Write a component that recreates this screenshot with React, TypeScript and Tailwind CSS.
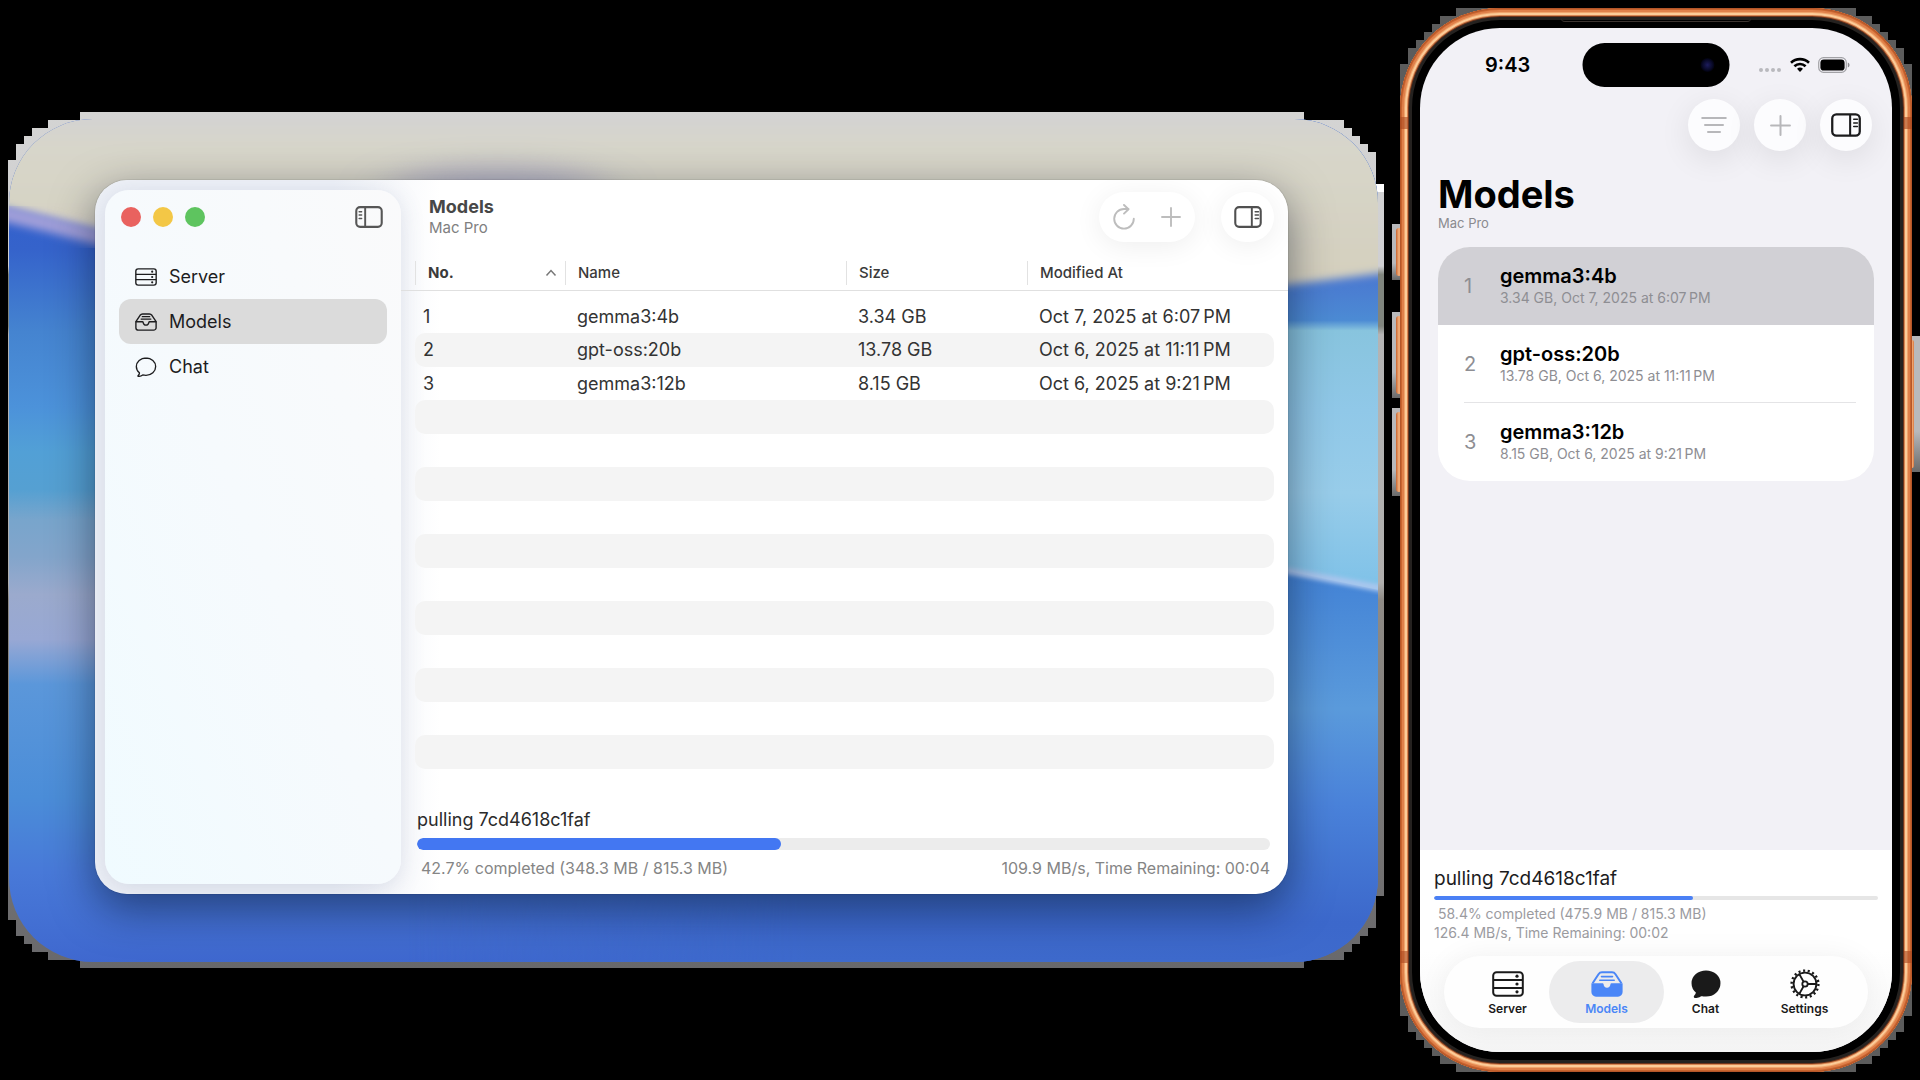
import { useState } from "react";
import type { ReactNode } from "react";

type Model = { no: number; name: string; size: string; modified: string };

const MODELS: Model[] = [
  { no: 1, name: "gemma3:4b", size: "3.34 GB", modified: "Oct 7, 2025 at 6:07\u202fPM" },
  { no: 2, name: "gpt-oss:20b", size: "13.78 GB", modified: "Oct 6, 2025 at 11:11\u202fPM" },
  { no: 3, name: "gemma3:12b", size: "8.15 GB", modified: "Oct 6, 2025 at 9:21\u202fPM" },
];

const EMPTY_ROWS = Array.from({ length: 11 }, (_, i) => MODELS.length + i);

/* ---------- icons ---------- */

function ServerIcon({ className }: { className: string }) {
  return (
    <svg viewBox="0 0 32 26" className={className} fill="none" stroke="currentColor" strokeWidth="2" aria-hidden="true">
      <rect x="1.2" y="1.2" width="29.6" height="23.6" rx="3.4" />
      <path d="M1.2 9.1h29.6M1.2 16.9h29.6" />
      <g fill="currentColor" stroke="none">
        <circle cx="25" cy="5.2" r="1.6" />
        <circle cx="25" cy="13" r="1.6" />
        <circle cx="25" cy="20.8" r="1.6" />
      </g>
    </svg>
  );
}

function TrayIcon({ className }: { className: string }) {
  return (
    <svg viewBox="0 0 32 26" className={className} fill="none" stroke="currentColor" strokeWidth="2" strokeLinejoin="round" strokeLinecap="round" aria-hidden="true">
      <path d="M1.3 12.6 7.4 3.2Q8.8 1.3 11 1.3h10q2.200 0 3.600 1.900l6.100 9.400v8.600a3.600 3.600 0 0 1-3.600 3.600H4.900a3.600 3.600 0 0 1-3.600-3.600z" />
      <path d="M1.600 12.600h9.100c.7 0 1.100.5 1.200 1.200.4 2.200 2 3.700 4.100 3.700s3.700-1.500 4.100-3.700c.1-.7.5-1.200 1.200-1.200h9.100" />
      <path d="M10.500 5.200h11M8.800 8.800h14.400" strokeWidth="1.600" />
    </svg>
  );
}

function TrayFilledIcon({ className }: { className: string }) {
  return (
    <svg viewBox="0 0 32 26" className={className} aria-hidden="true">
      <path
        d="M1.600 12.200 7.500 3.200Q8.800 1.300 11 1.300h10q2.200 0 3.500 1.900l5.900 9"
        fill="none"
        stroke="currentColor"
        strokeWidth="2"
        strokeLinejoin="round"
      />
      <path d="M10.500 5.600h11M8.800 9.200h14.400" stroke="currentColor" strokeWidth="1.600" strokeLinecap="round" />
      <path
        d="M.4 12.200h11.200c.5 0 .8.300.9.800.2 2.200 1.500 3.700 3.500 3.700s3.300-1.500 3.500-3.700c.1-.5.4-.8.900-.8h11.200v8.900a4.600 4.600 0 0 1-4.600 4.600H5a4.600 4.600 0 0 1-4.600-4.600z"
        fill="currentColor"
      />
    </svg>
  );
}

const BUBBLE = "M16 1.500C7.900 1.500 1.500 7 1.500 14.200c0 3.900 1.800 7.200 4.600 9.500.2 1.400-.7 3.100-2 4.400-.4.500-.1 1 .5 1 2.500-.1 4.900-1 6.500-2.200 1.500.4 3.200.6 4.900.6 8.100 0 14.500-5.900 14.500-13.300S24.100 1.500 16 1.500z";

function ChatIcon({ className, filled }: { className: string; filled?: boolean }) {
  return (
    <svg viewBox="0 0 32 30" className={className} fill={filled ? "currentColor" : "none"} stroke="currentColor" strokeWidth="2" strokeLinejoin="round" aria-hidden="true">
      <path d={BUBBLE} />
    </svg>
  );
}

function GearIcon({ className }: { className: string }) {
  return (
    <svg viewBox="0 0 30 30" className={className} fill="none" stroke="currentColor" aria-hidden="true">
      <circle cx="15" cy="15" r="13.400" strokeWidth="2.400" strokeDasharray="2.100 2.577" />
      <circle cx="15" cy="15" r="11.400" strokeWidth="1.900" />
      <circle cx="15" cy="15" r="2.700" strokeWidth="1.800" />
      <path d="M17.700 15h8.300M13.600 12.700 9.500 5.500M13.600 17.300l-4.100 7.200" strokeWidth="1.800" />
    </svg>
  );
}

function PanelIcon({ className, side }: { className: string; side: "left" | "right" }) {
  const marks = side === "left" ? "M4.200 6h2.600M4.200 9.500h2.600M4.200 13h2.600" : "M22 6h3.500M22 9.500h3.500M22 13h3.500";
  return (
    <svg viewBox="0 0 29 23" className={className} fill="none" stroke="currentColor" aria-hidden="true">
      <rect x="1.200" y="1.200" width="26.600" height="20.600" rx="4" strokeWidth="2.200" />
      <path d={side === "left" ? "M10.500 1.200v20.600" : "M18.500 1.200v20.600"} strokeWidth="2" />
      <path d={marks} strokeWidth="1.500" strokeLinecap="round" />
    </svg>
  );
}

function PlusIcon({ className }: { className: string }) {
  return (
    <svg viewBox="0 0 20 20" className={className} fill="none" stroke="currentColor" strokeWidth="1.900" strokeLinecap="round" aria-hidden="true">
      <path d="M10 1v18M1 10h18" />
    </svg>
  );
}

function RefreshIcon({ className }: { className: string }) {
  return (
    <svg viewBox="0 0 22 26" className={className} fill="none" stroke="currentColor" strokeWidth="1.900" strokeLinecap="round" strokeLinejoin="round" aria-hidden="true">
      <path d="M20.800 14.800A9.800 9.800 0 1 1 11 5h4.300" />
      <path d="M11 1l4.500 4.200L11 9.600" />
    </svg>
  );
}

function FilterIcon({ className }: { className: string }) {
  return (
    <svg viewBox="0 0 26 18" className={className} fill="none" stroke="currentColor" strokeWidth="2" strokeLinecap="round" aria-hidden="true">
      <path d="M1.200 2h23.600M4 9h18M7 16h12" />
    </svg>
  );
}

/* ---------- wallpaper ---------- */

function Wallpaper() {
  return (
    <svg viewBox="0 0 1376 856" preserveAspectRatio="none" className="absolute inset-0 size-full" aria-hidden="true">
      <defs>
        <linearGradient id="edge" x1="0" y1="0" x2="0" y2="1">
          <stop offset="0" stopColor="#d4d4d3" />
          <stop offset="0.180" stopColor="#cfcfd2" />
          <stop offset="0.190" stopColor="#80857e" />
          <stop offset="0.250" stopColor="#80857e" />
          <stop offset="0.260" stopColor="#b4b4b4" />
          <stop offset="0.550" stopColor="#b0afae" />
          <stop offset="0.570" stopColor="#8f8b86" />
          <stop offset="1" stopColor="#68686b" />
        </linearGradient>
        <linearGradient id="sky" x1="0" y1="0" x2="0" y2="200" gradientUnits="userSpaceOnUse">
          <stop offset="0" stopColor="#d3d3d2" />
          <stop offset="0.060" stopColor="#d4d3d0" />
          <stop offset="0.180" stopColor="#d8d6ca" />
          <stop offset="1" stopColor="#d3cebb" />
        </linearGradient>
        <linearGradient id="west" x1="0" y1="100" x2="0" y2="850" gradientUnits="userSpaceOnUse">
          <stop offset="0" stopColor="#3360cc" />
          <stop offset="0.050" stopColor="#3563cb" />
          <stop offset="0.160" stopColor="#4584d0" />
          <stop offset="0.260" stopColor="#4c92da" />
          <stop offset="0.320" stopColor="#52a0d6" />
          <stop offset="0.370" stopColor="#55a0d2" />
          <stop offset="0.410" stopColor="#78a5cc" />
          <stop offset="0.460" stopColor="#83a5cb" />
          <stop offset="0.510" stopColor="#9baacd" />
          <stop offset="0.570" stopColor="#98a8d4" />
          <stop offset="0.630" stopColor="#5b97da" />
          <stop offset="0.780" stopColor="#4b8dd8" />
          <stop offset="0.880" stopColor="#4879d8" />
          <stop offset="1" stopColor="#3f68cf" />
        </linearGradient>
        <linearGradient id="east" x1="0" y1="160" x2="0" y2="850" gradientUnits="userSpaceOnUse">
          <stop offset="0" stopColor="#4a76d0" />
          <stop offset="0.070" stopColor="#4c8bd4" />
          <stop offset="0.085" stopColor="#88c4de" />
          <stop offset="0.200" stopColor="#90c8e8" />
          <stop offset="0.320" stopColor="#98cdea" />
          <stop offset="0.450" stopColor="#80c2e8" />
          <stop offset="0.550" stopColor="#84c5ea" />
        </linearGradient>
        <linearGradient id="sea" x1="0" y1="460" x2="0" y2="850" gradientUnits="userSpaceOnUse">
          <stop offset="0" stopColor="#4383d6" />
          <stop offset="0.350" stopColor="#5b9bdc" />
          <stop offset="0.600" stopColor="#4a82da" />
          <stop offset="0.900" stopColor="#3c68cb" />
          <stop offset="1" stopColor="#3e6acc" />
        </linearGradient>
        <linearGradient id="blend" x1="0" y1="0" x2="1" y2="0">
          <stop offset="0" stopColor="#fff" stopOpacity="0" />
          <stop offset="1" stopColor="#fff" />
        </linearGradient>
        <filter id="soft4" x="-20%" y="-20%" width="140%" height="140%">
          <feGaussianBlur stdDeviation="4" />
        </filter>
        <filter id="soft2" x="-20%" y="-20%" width="140%" height="140%">
          <feGaussianBlur stdDeviation="2" />
        </filter>
        <filter id="soft20" x="-50%" y="-100%" width="200%" height="300%">
          <feGaussianBlur stdDeviation="26 14" />
        </filter>
        <clipPath id="desk">
          <rect x="1" y="7" width="1369" height="843" rx="84" />
        </clipPath>
        <mask id="fade">
          <rect x="400" y="0" width="400" height="856" fill="url(#blend)" />
          <rect x="800" y="0" width="576" height="856" fill="#fff" />
        </mask>
      </defs>
      <path
        fill="url(#edge)"
        d="M72 0H1296V8H1336V16H1344V24H1352V32H1360V40H1368V72H1376V784H1368V816H1360V824H1352V832H1344V840H1336V848H1296V856H72V848H40V840H24V832H16V824H8V808H0V48H8V32H16V24H24V16H40V8H72Z"
      />
      <path fill="#fff" d="M1368 72h8v8h-8z" />
      <g clipPath="url(#desk)">
        <path fill="url(#west)" d="M0 0H1376V856H0z" />
        <g mask="url(#fade)">
          <path fill="url(#east)" d="M400 0H1376V856H400z" />
          <path fill="url(#sea)" d="M400 380 1280 459 1376 479V856H400z" />
          <path d="M1180 450 1280 459 1376 477" stroke="#a9c6ee" strokeWidth="7" fill="none" filter="url(#soft2)" />
        </g>
        <path fill="url(#sky)" filter="url(#soft4)" d="M-20-20H1400V158L1270 174 700 150H200L80 118-20 92z" />
        <ellipse cx="490" cy="76" rx="110" ry="22" fill="#a3a2bb" opacity="0.800" filter="url(#soft20)" />
        <path d="M-10 100 40 112 110 130" stroke="#a09fd9" strokeWidth="16" fill="none" filter="url(#soft4)" />
      </g>
    </svg>
  );
}

/* ---------- desktop window ---------- */

const SIDEBAR = [
  { label: "Server", icon: <ServerIcon className="h-[18px] w-[22px]" /> },
  { label: "Models", icon: <TrayIcon className="h-[18px] w-[22px]" /> },
  { label: "Chat", icon: <ChatIcon className="h-5 w-[22px]" /> },
];

function Sidebar({ active, onSelect }: { active: string; onSelect: (s: string) => void }) {
  return (
    <aside className="my-2.5 ml-2.5 w-[296px] shrink-0 rounded-3xl bg-linear-to-bl from-[#fafafb] via-[#f6fafd] to-[#f0fbff] px-3.5 shadow-[0_4px_24px_rgba(60,80,130,0.16)]">
      <div className="flex h-[54px] items-center gap-3 pr-1 pl-0.5">
        <button aria-label="Close" className="size-5 rounded-full bg-[#e9625f]" />
        <button aria-label="Minimize" className="size-5 rounded-full bg-[#f3c746]" />
        <button aria-label="Zoom" className="size-5 rounded-full bg-[#5ec45f]" />
        <button aria-label="Toggle sidebar" className="ml-auto text-[#565656]">
          <PanelIcon side="left" className="h-[22px] w-7" />
        </button>
      </div>
      <nav className="mt-2.5">
        {SIDEBAR.map(({ label, icon }) => (
          <button
            key={label}
            onClick={() => onSelect(label)}
            aria-current={active === label ? "page" : undefined}
            className={
              "flex h-[45px] w-full items-center gap-3 rounded-xl pl-4 text-lg text-[#1d1d1f] " +
              (active === label ? "bg-[#dbdbdb]" : "")
            }
          >
            {icon}
            {label}
          </button>
        ))}
      </nav>
    </aside>
  );
}

function ModelsTable() {
  const [ascending, setAscending] = useState(true);
  const rows = ascending ? MODELS : [...MODELS].reverse();
  const head = "border-l border-[#e2e2e2] pl-3 text-left font-medium leading-6";
  return (
    <table className="w-full table-fixed border-separate border-spacing-0 text-lg text-[#333]">
      <colgroup>
        <col className="w-[150px]" />
        <col className="w-[281px]" />
        <col className="w-[181px]" />
        <col />
      </colgroup>
      <thead className="relative text-[15px] text-[#3a3a3a] after:absolute after:-inset-x-3.5 after:bottom-0 after:h-px after:bg-[#e0e0e0]">
        <tr>
          <th aria-sort={ascending ? "ascending" : "descending"} className={head}>
            <button className="flex w-full items-center justify-between pr-2 font-bold" onClick={() => setAscending(!ascending)}>
              No.
              <svg viewBox="0 0 12 8" className={"h-2 w-3" + (ascending ? "" : " rotate-180")} fill="none" stroke="#777" strokeWidth="1.500" aria-hidden="true">
                <path d="M1.500 6.500 6 1.500l4.500 5" />
              </svg>
            </button>
          </th>
          <th className={head}>Name</th>
          <th className={head}>Size</th>
          <th className={head}>Modified At</th>
        </tr>
        <tr aria-hidden="true">
          <td colSpan={4} className="h-1.5" />
        </tr>
      </thead>
      <tbody className="before:block before:h-[9px]">
        {rows.map((m, i) => (
          <tr key={m.no} className={i % 2 ? "h-[34px] [&>td]:bg-[#f4f4f4]" : "h-[33px]"}>
            <td className="rounded-l-[10px] pl-2">{m.no}</td>
            <td className="pl-3">{m.name}</td>
            <td className="pl-3">{m.size}</td>
            <td className="rounded-r-[10px] pl-3 whitespace-nowrap">{m.modified}</td>
          </tr>
        ))}
        {EMPTY_ROWS.map((i) => (
          <tr key={"empty" + i} className={i % 2 ? "h-[34px] [&>td]:bg-[#f4f4f4]" : "h-[33px]"}>
            <td colSpan={4} className="rounded-[10px]" />
          </tr>
        ))}
      </tbody>
    </table>
  );
}

function ProgressBar({ value, className, fill }: { value: number; className: string; fill: string }) {
  return (
    <div role="progressbar" aria-label="Download progress" aria-valuenow={value} aria-valuemin={0} aria-valuemax={100} className={className}>
      <div className={fill} style={{ width: `${value}%` }} />
    </div>
  );
}

function MacWindow() {
  const [active, setActive] = useState("Models");
  return (
    <section className="relative flex flex-1 overflow-hidden rounded-[32px] bg-linear-to-r from-[#eef1f7] from-20% via-white via-29% to-white shadow-[0_0_1px_rgba(0,0,0,0.6),0_14px_44px_rgba(0,10,30,0.5)]">
      <Sidebar active={active} onSelect={setActive} />
      <main className="min-w-0 flex-1 px-3.5">
        <header className="flex h-[81px] justify-between">
          <div className="pt-4 pl-3.5">
            <h1 className="text-lg leading-[22px] font-bold text-[#474747]">Models</h1>
            <p className="text-[15px] leading-5 text-[#808080]">Mac Pro</p>
          </div>
          <div className="flex gap-[26px] pt-3">
            <div className="flex h-[50px] w-24 items-center justify-between rounded-full bg-white px-3.5 text-[#bdbdbd] shadow-[0_4px_28px_rgba(0,0,0,0.07)]">
              <button aria-label="Refresh">
                <RefreshIcon className="h-[26px] w-[22px]" />
              </button>
              <button aria-label="Add model">
                <PlusIcon className="size-5" />
              </button>
            </div>
            <button aria-label="Toggle inspector" className="flex h-[50px] w-[53px] items-center justify-center rounded-full bg-white text-[#505050] shadow-[0_4px_28px_rgba(0,0,0,0.07)]">
              <PanelIcon side="right" className="h-[22px] w-7" />
            </button>
          </div>
        </header>
        <ModelsTable />
        <div className="mt-[37px] pr-1 pb-3.5 pl-0.5">
          <p className="text-lg leading-7 text-[#2b2b2b]">pulling 7cd4618c1faf</p>
          <ProgressBar value={42.7} className="mt-1 h-3 overflow-hidden rounded-full bg-[#ececec]" fill="h-full rounded-full bg-[#4377f2]" />
          <div className="mt-1.5 flex justify-between pl-1 text-base leading-6 text-[#858585]">
            <span>42.7% completed (348.3 MB / 815.3 MB)</span>
            <span>109.9 MB/s, Time Remaining: 00:04</span>
          </div>
        </div>
      </main>
    </section>
  );
}

/* ---------- phone ---------- */

function SideKey({ className }: { className: string }) {
  return (
    <div className={"absolute bg-linear-to-b from-[#b9b9bb] from-70% to-[#6a6a6a] " + className}>
      <div className="my-1 flex-1 rounded-sm bg-linear-to-r from-[#c8642f] via-[#f5b27c] to-[#d9773f]" />
    </div>
  );
}

function StatusBar() {
  return (
    <div className="flex h-[42px] items-center pr-[42px] pl-[65px]">
      <span className="text-xl font-semibold">9:43</span>
      <div className="ml-auto flex items-center gap-2">
        <svg viewBox="0 0 24 16" className="h-4 w-6" fill="#b9b9bd" aria-hidden="true">
          <circle cx="3" cy="13" r="2" />
          <circle cx="9" cy="13" r="2" />
          <circle cx="15" cy="13" r="2" />
          <circle cx="21" cy="13" r="2" />
        </svg>
        <svg viewBox="0 0 20 15" className="h-4 w-5" fill="none" stroke="#000" strokeWidth="2.600" aria-label="Wi-Fi">
          <path d="M1 5.200a13 13 0 0 1 18 0M4.400 8.700a8.200 8.200 0 0 1 11.200 0" />
          <path d="M7 11.300a4.400 4.400 0 0 1 6 0L10 14.500z" fill="#000" stroke="none" />
        </svg>
        <svg viewBox="0 0 32 16" className="h-4 w-8" aria-label="Battery">
          <rect x="0.700" y="0.700" width="27.600" height="14.600" rx="4.800" fill="none" stroke="#a2a2a6" strokeWidth="1.200" />
          <rect x="2.400" y="2.400" width="24.200" height="11.200" rx="3.400" />
          <path d="M29.800 5.600c1.300.5 1.700 1.400 1.700 2.400s-.4 1.900-1.700 2.400z" fill="#8a8a8e" />
        </svg>
      </div>
    </div>
  );
}

function RoundButton({ label, className, children }: { label: string; className: string; children: ReactNode }) {
  return (
    <button aria-label={label} className={"flex size-[52px] items-center justify-center rounded-full bg-[#fcfcfe] shadow-[0_8px_32px_rgba(0,0,0,0.09)] " + className}>
      {children}
    </button>
  );
}

const TABS = [
  { label: "Server", icon: <ServerIcon className="h-[26px] w-8" /> },
  { label: "Models", icon: <TrayFilledIcon className="h-[26px] w-8" /> },
  { label: "Chat", icon: <ChatIcon filled className="h-7 w-8" /> },
  { label: "Settings", icon: <GearIcon className="size-[30px]" /> },
];

function Phone() {
  const [tab, setTab] = useState("Models");
  const [selected, setSelected] = useState(1);
  return (
    <section className="relative flex w-[512px] shrink-0">
      <svg viewBox="0 0 512 1064" preserveAspectRatio="none" className="absolute inset-0 size-full" fill="#5c5c5c" aria-hidden="true">
        <path d="M56 0H456V8H472V16H480V24H488V32H496V40H504V56H512V1008H504V1024H496V1032H488V1040H480V1048H472V1056H456V1064H56V1056H40V1048H32V1040H24V1032H16V1024H8V1008H0V56H8V40H16V32H24V24H32V16H40V8H56Z" />
      </svg>
      <SideKey className="top-54 -left-2 flex h-14 w-2.5 pl-1" />
      <SideKey className="top-76 -left-2 flex h-[86px] w-2.5 pl-1" />
      <SideKey className="top-100 -left-2 flex h-[88px] w-2.5 pl-1" />
      <SideKey className="top-82 -right-2 flex h-[136px] w-2.5 pr-1.5" />
      <div className="relative flex flex-1 rounded-[100px] bg-black p-5 shadow-[inset_0_0_0_1px_#b4562a,inset_0_0_0_2px_#c9652f,inset_0_0_0_4px_#e0804a,inset_0_0_0_5px_#f0a56c,inset_0_0_0_7px_#fccb98,inset_0_0_0_8px_#d88450,inset_0_0_0_9px_#6e331a,inset_0_0_0_12px_#252220]">
        <div className="absolute top-[109px] left-0 h-3 w-2 bg-[#a8481f]/60" />
        <div className="absolute top-[109px] right-0 h-3 w-2 bg-[#a8481f]/60" />
        <div className="absolute bottom-[109px] left-0 h-3 w-2 bg-[#a8481f]/60" />
        <div className="absolute right-0 bottom-[109px] h-3 w-2 bg-[#a8481f]/60" />
        <div className="absolute top-2.5 left-1/2 h-1 w-[190px] -translate-x-1/2 rounded-b-full border-b border-[#3d3531]" />
        <div className="relative flex min-h-[1024px] flex-1 flex-col overflow-hidden rounded-[80px] bg-[#f2f1f6] pt-4">
          <div className="absolute top-[15px] left-1/2 flex h-11 w-[147px] -translate-x-1/2 items-center justify-end rounded-full bg-black pr-[15px]">
            <div className="size-3.5 rounded-full bg-radial from-[#1d1c5e] via-[#090a28] to-black" />
          </div>
          <StatusBar />
          <div className="mt-[13px] flex justify-end gap-3.5 pr-5">
            <RoundButton label="Filter" className="text-[#b7b7ba]">
              <FilterIcon className="h-[18px] w-[26px]" />
            </RoundButton>
            <RoundButton label="Add model" className="text-[#b7b7ba]">
              <PlusIcon className="size-[21px]" />
            </RoundButton>
            <RoundButton label="Toggle inspector" className="text-[#1b1b1d]">
              <PanelIcon side="right" className="h-6 w-[30px]" />
            </RoundButton>
          </div>
          <div className="mt-[22px] px-[18px]">
            <h2 className="text-[38px] leading-[42px] font-bold">Models</h2>
            <p className="text-[13px] leading-4 text-[#8a8a8e]">Mac Pro</p>
            <ul className="mt-4 overflow-hidden rounded-4xl bg-white">
              {MODELS.map((m) => (
                <li key={m.no} className={selected === m.no ? "bg-[#d1d0d5]" : ""}>
                  <button onClick={() => setSelected(m.no)} className="flex h-[78px] w-full pr-[18px] pl-[26px] text-left">
                    <span
                      className={
                        "flex flex-1 items-center border-b " +
                        (m.no === selected || m.no === MODELS.length ? "border-transparent" : "border-[#e4e4e6]")
                      }
                    >
                      <span className="w-9 text-xl text-[#8e8e93]">{m.no}</span>
                      <span>
                        <span className="block text-xl leading-6 font-semibold">{m.name}</span>
                        <span className="block text-sm leading-5 text-[#8e8e93]">
                          {m.size}, {m.modified}
                        </span>
                      </span>
                    </span>
                  </button>
                </li>
              ))}
            </ul>
          </div>
          <div className="mt-auto bg-linear-to-b from-white from-50% to-[#f5f5f5] px-3.5 pt-4 pb-6">
            <p className="text-[19px] leading-[26px] text-[#1c1c1e]">pulling 7cd4618c1faf</p>
            <ProgressBar value={58.4} className="mt-1 h-1 overflow-hidden rounded-full bg-[#e6e6e6]" fill="h-full rounded-full bg-[#4a80f5]" />
            <p className="mt-1 pl-1 text-sm leading-[19px] text-[#9b9b9f]">58.4% completed (475.9 MB / 815.3 MB)</p>
            <p className="text-sm leading-[19px] text-[#9b9b9f]">126.4 MB/s, Time Remaining: 00:02</p>
            <nav className="mx-2.5 mt-3.5 grid h-[72px] grid-cols-4 rounded-full bg-[#fefefe] px-3.5 py-[5px] shadow-[0_0_30px_rgba(0,0,0,0.06)]">
              {TABS.map(({ label, icon }) => (
                <button
                  key={label}
                  onClick={() => setTab(label)}
                  aria-current={tab === label ? "page" : undefined}
                  className={
                    "-mx-2 flex flex-col items-center justify-end rounded-full pb-1.5 text-xs font-semibold " +
                    (tab === label ? "bg-[#ececed] text-[#4a86f7]" : "text-[#1a1a1a]")
                  }
                >
                  <span className="flex h-[30px] items-center">{icon}</span>
                  <span className="mt-0.5 leading-4">{label}</span>
                </button>
              ))}
            </nav>
          </div>
        </div>
      </div>
    </section>
  );
}

export default function App() {
  return (
    <div className="flex min-h-screen items-center gap-4 bg-black px-2 font-['Inter',sans-serif]">
      <section className="relative flex min-w-0 flex-1 pt-[68px] pr-24 pb-[74px] pl-[87px]">
        <Wallpaper />
        <MacWindow />
      </section>
      <Phone />
    </div>
  );
}
